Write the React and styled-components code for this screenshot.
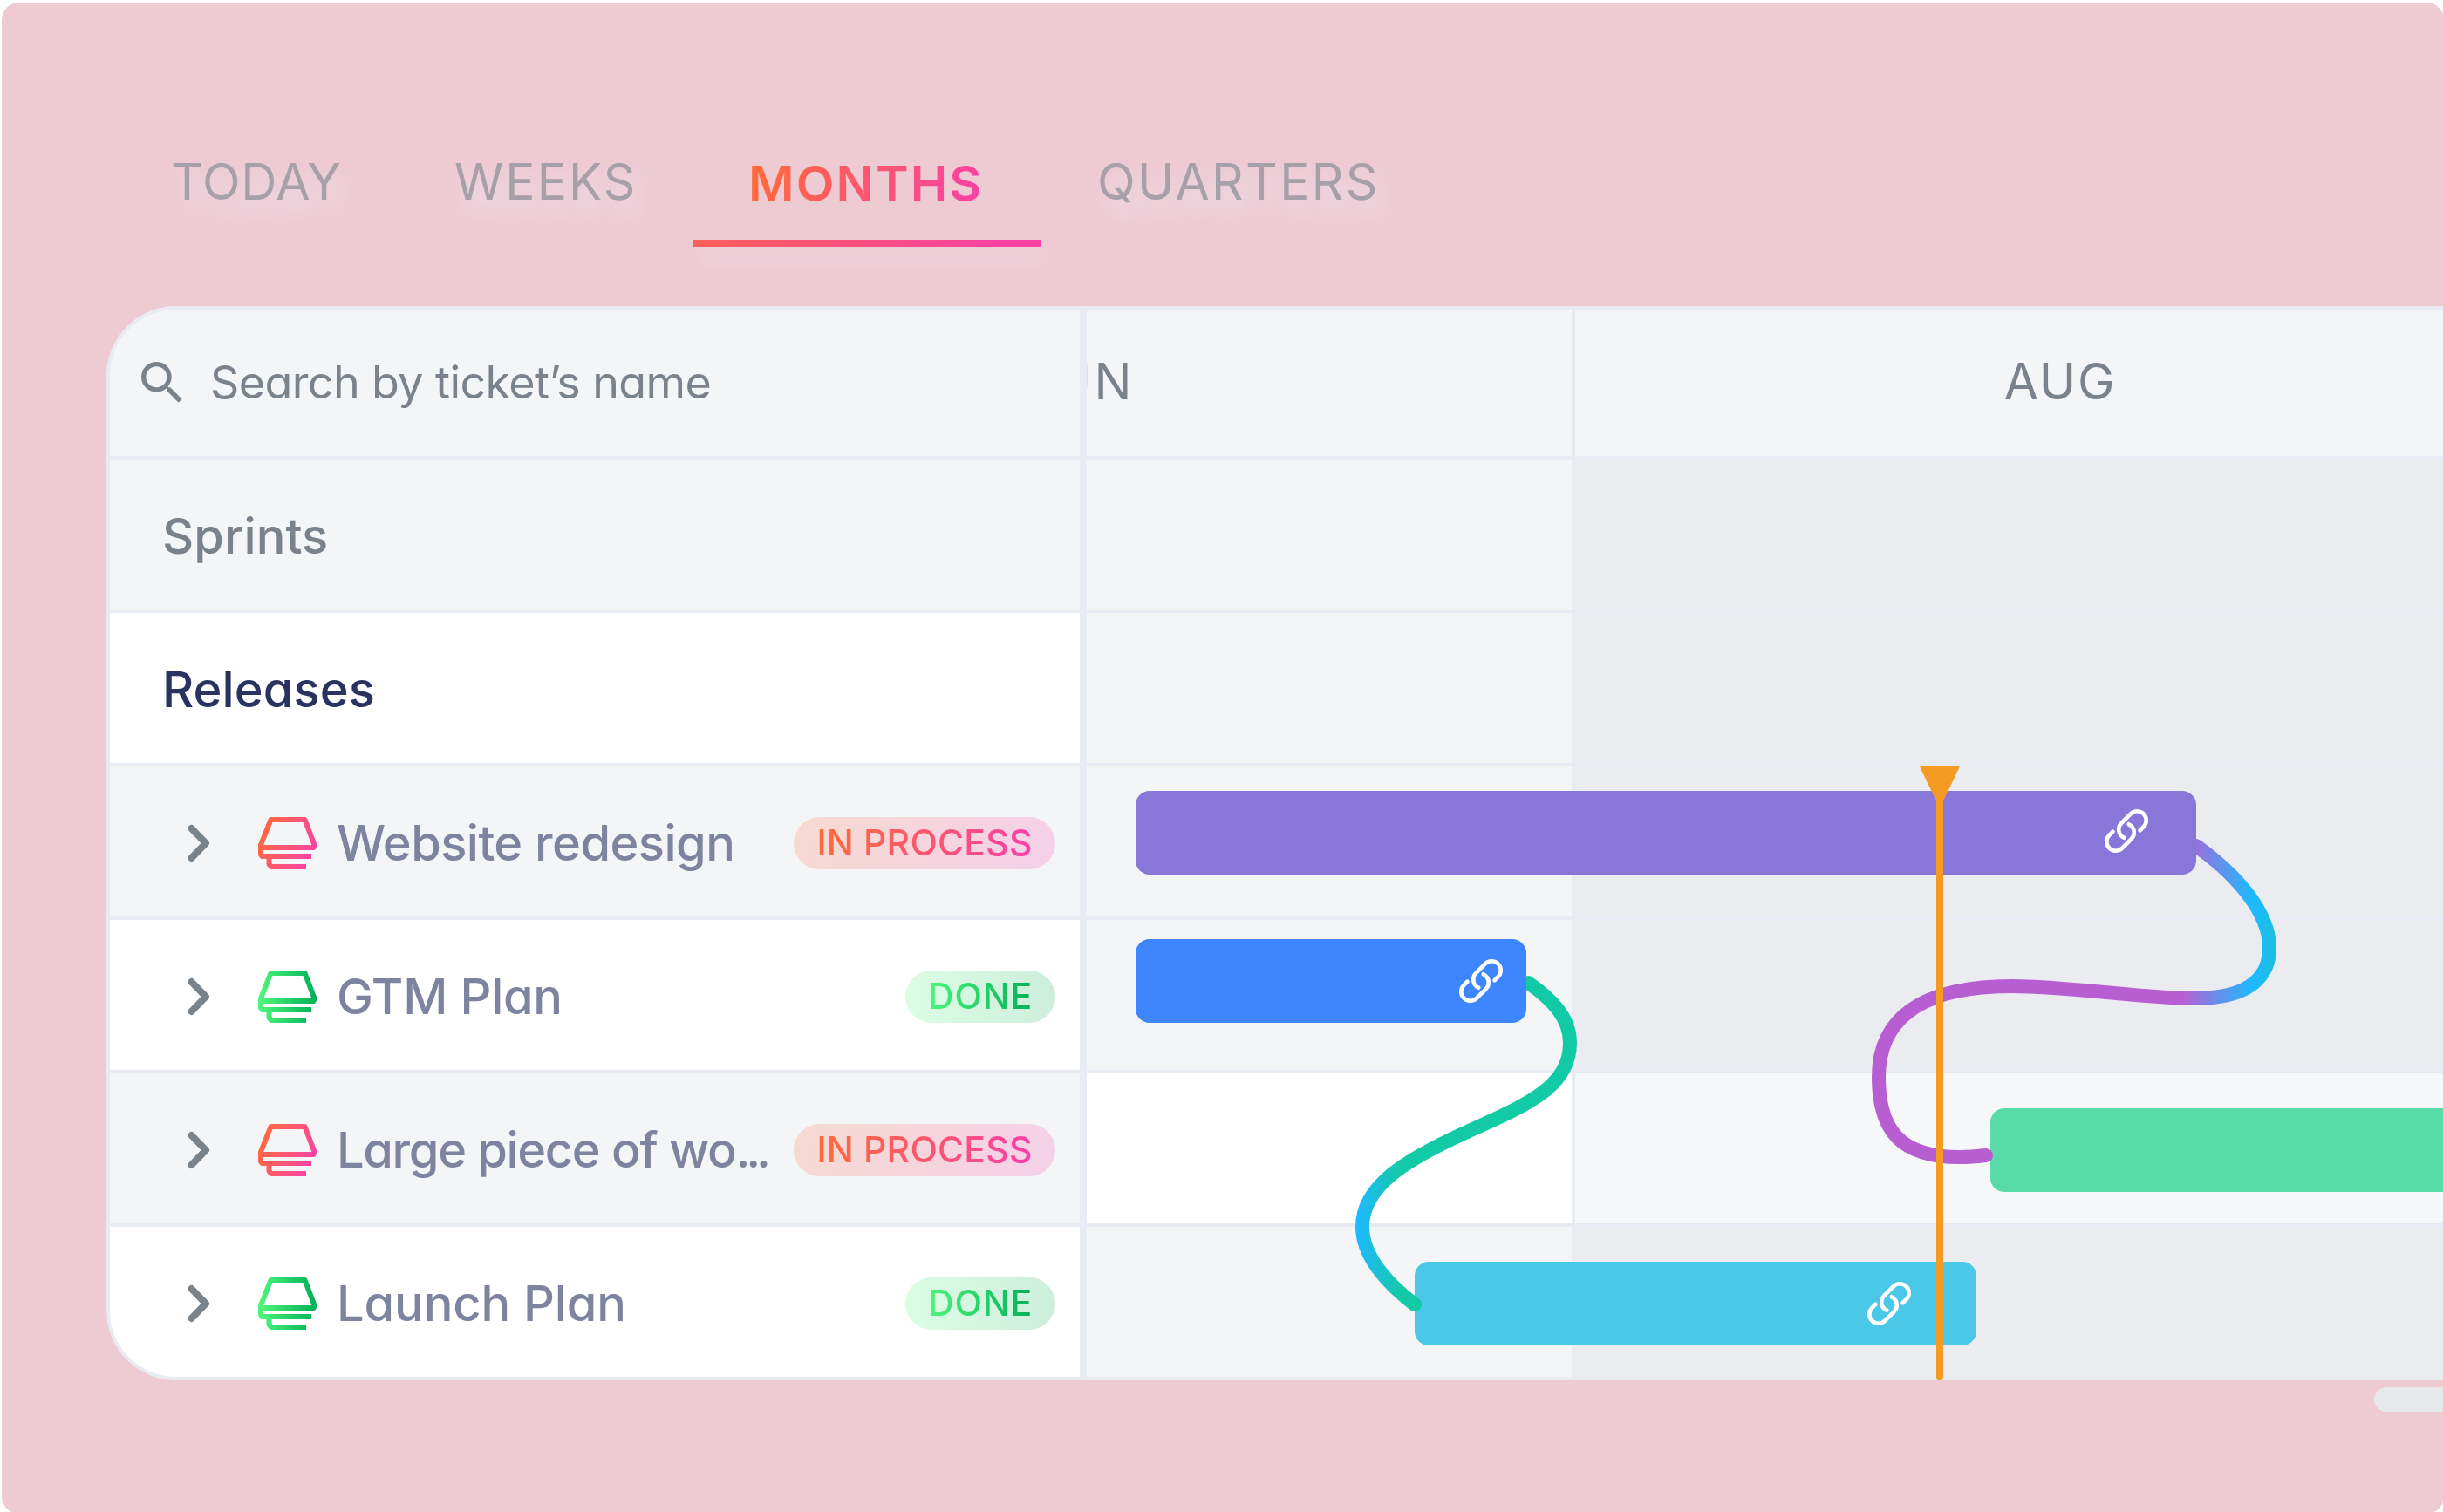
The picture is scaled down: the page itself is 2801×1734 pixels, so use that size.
import styled, { createGlobalStyle, css } from "styled-components"
import { MdSearch } from "react-icons/md"

const GlobalStyle = createGlobalStyle`
* {
box-sizing: border-box;
}
body {
margin: 0;
overflow: hidden;
background: #ffffff;
font-family: Inter, "Liberation Sans", sans-serif;
font-feature-settings: "cv11";
}
`

const line = "#e9ebf2"
const grey = "#f4f5f7"

const Frame = styled.div`
width: 2800px;
height: 1733px;
margin: 3px 0 0 2px;
border-radius: 20px;
overflow: hidden;
background: #eecad3;
`

const Tabs = styled.nav`
display: flex;
height: 280px;
padding: 166px 0 0 130px;
`

const Tab = styled.div`
display: flex;
flex-direction: column;
width: ${(p) => p.$width}px;
height: 114px;
padding: ${(p) => (p.$active ? 2 : 0)}px 0 0 64px;
font-size: 57px;
line-height: 80px;
letter-spacing: ${(p) => p.$spacing || 0}px;
white-space: nowrap;
color: #a8a0a9;
font-weight: ${(p) => (p.$active ? 600 : 400)};
text-shadow: ${(p) => (p.$active ? "none" : "8px 16px 24px rgba(236, 238, 246, 0.75)")};
`

const TabLabel = styled.span`
align-self: flex-start;
${(p) => p.$active && css`
background: linear-gradient(110deg, #ff6d35, #f93fab);
background-clip: text;
-webkit-background-clip: text;
color: transparent;
`}
`

const TabLine = styled.div`
width: 400px;
height: 8px;
margin: 24px 0 0 -64px;
background: linear-gradient(90deg, #fc6058, #f843a3 88%);
box-shadow: 8px 16px 20px rgba(236, 238, 246, 0.5);
`

const Board = styled.div`
position: relative;
margin: 68px 0 0 120px;
width: 2690px;
`

const Panel = styled.div`
display: flex;
height: 1232px;
border: 4px solid ${line};
border-radius: 80px 0 0 80px;
overflow: hidden;
background: ${grey};
`

const Sidebar = styled.div`
flex: none;
width: 1120px;
border-right: 8px solid ${line};
`

const Search = styled.div`
display: flex;
align-items: center;
height: 172px;
padding: 0 0 0 28px;
border-bottom: 4px solid ${line};
font-size: 52px;
color: #7a828c;
`

const SearchText = styled.span`
padding-bottom: 2px;
margin-left: 23px;
letter-spacing: -0.6px;
`

const Row = styled.div`
display: flex;
align-items: center;
height: 176px;
padding: 4px 28px 0 60px;
border-bottom: 4px solid ${line};
background: ${(p) => (p.$white ? "#ffffff" : grey)};
`

const Section = styled.span`
font-size: 56px;
font-weight: 500;
letter-spacing: 0.1px;
color: ${(p) => (p.$dark ? "#2a335f" : "#7a828c")};
`

const TicketName = styled.span`
margin-left: 22px;
font-size: 56px;
font-weight: 500;
letter-spacing: ${(p) => p.$spacing || 0}px;
white-space: nowrap;
color: #7e84a0;
`

const Dots = styled.span`
letter-spacing: -5.2px;
`

const Badge = styled.div`
display: flex;
flex: none;
align-items: center;
justify-content: center;
width: ${(p) => (p.$done ? 172 : 300)}px;
height: 60px;
padding-bottom: 2px;
margin-left: auto;
border-radius: 30px;
background: ${(p) => (p.$done
        ? "linear-gradient(90deg, #50f57833, #00a85033)"
        : "linear-gradient(115deg, #ff6d3533, #f83cb033)")};
`

const BadgeText = styled.span`
font-size: 41px;
font-weight: 500;
white-space: nowrap;
letter-spacing: ${(p) => (p.$done ? 0.8 : 0.2)}px;
background: ${(p) => (p.$done
        ? "linear-gradient(90deg, #4df57a, #02b058)"
        : "linear-gradient(105deg, #ff6d35, #f93fab)")};
background-clip: text;
-webkit-background-clip: text;
color: transparent;
`

const Chevron = styled.svg`
flex: none;
width: 26px;
height: 44px;
margin-left: 29px;
`

const Stack = styled.svg`
flex: none;
width: 68px;
height: 60px;
margin-left: 55px;
`

const Timeline = styled.div`
flex: 1;
`

const Months = styled.div`
display: grid;
grid-template-columns: 560px 1fr;
height: 172px;
border-bottom: 4px solid ${line};
`

const Month = styled.div`
display: flex;
align-items: center;
justify-content: ${(p) => (p.$cut ? "flex-end" : "center")};
padding: 0 ${(p) => (p.$cut ? 501 : 0)}px 4px 0;
border-right: ${(p) => (p.$cut ? 4 : 0)}px solid ${line};
overflow: hidden;
font-size: 57px;
letter-spacing: ${(p) => (p.$cut ? 3.5 : 1.7)}px;
white-space: nowrap;
color: #7a828c;
`

const AugMonth = styled(Month)`
width: 1112px;
`

const Lane = styled.div`
display: grid;
grid-template-columns: 560px 1fr;
grid-template-rows: 172px;
height: 176px;
border-bottom: 4px solid ${line};
`

const Cell = styled.div`
grid-row: 1;
grid-column: ${(p) => (p.$aug ? 2 : 1)};
border-right: ${(p) => (p.$aug ? 0 : 4)}px solid ${line};
background: ${(p) => {
        if (p.$aug) return p.$white ? "#f6f7f9" : "#ebecf0"
        return p.$white ? "#ffffff" : grey
    }};
`

const Bar = styled.div`
grid-row: 1;
grid-column: 1 / -1;
display: flex;
align-items: center;
justify-content: flex-end;
position: relative;
z-index: ${(p) => (p.$front ? 2 : 0)};
width: ${(p) => p.$width}px;
height: 96px;
margin: ${(p) => p.$top}px 0 0 ${(p) => p.$left}px;
padding-right: ${(p) => p.$end || 0}px;
border-radius: 16px;
background: ${(p) => p.$color};
`

const LinkSvg = styled.svg`
width: 56px;
height: 56px;
margin-top: ${(p) => p.$shift || 0}px;
`

// dependencies run over the lanes, from the end of one bar to the start of another
const Connectors = styled.svg`
position: absolute;
left: 0;
top: 0;
width: 2690px;
height: 1232px;
z-index: 1;
pointer-events: none;
`

const Today = styled.svg`
position: absolute;
left: 2078px;
top: 528px;
width: 48px;
height: 704px;
z-index: 3;
`

const Scrollbar = styled.div`
width: 200px;
height: 28px;
margin: 8px 0 0 2720px;
border-radius: 14px;
background: #e6e8ea;
`

const tickets = [
    { name: "Website redesign", done: false, spacing: -0.55 },
    { name: "GTM Plan", done: true, spacing: -0.3 },
    { name: "Large piece of wo", cut: true, done: false, spacing: -1.35 },
    { name: "Launch Plan", done: true, spacing: -0.1 },
]

const lanes = [
    {},
    {},
    { bar: { $left: 56, $top: 28, $width: 1216, $end: 52, $color: "#8877d8", $front: true }, link: true, shift: -4 },
    { bar: { $left: 56, $top: 22, $width: 448, $end: 24, $color: "#3e86ff", $front: true }, link: true },
    { white: true, bar: { $left: 1036, $top: 40, $width: 700, $color: "#58dba8" } },
    { bar: { $left: 376, $top: 40, $width: 644, $end: 72, $color: "#4bc7e7" }, link: true },
]

function LinkIcon({ shift }) {
    return (
        <LinkSvg $shift={shift} viewBox="0 0 24 24" fill="none" stroke="#ffffff" strokeWidth="2" strokeLinecap="round" strokeLinejoin="round">
            <path d="M13.19 8.688a4.5 4.5 0 0 1 1.242 7.244l-4.5 4.5a4.5 4.5 0 0 1-6.364-6.364l1.757-1.757" />
            <path d="M18.675 11.689l1.757-1.757a4.5 4.5 0 0 0-6.364-6.364l-4.5 4.5a4.5 4.5 0 0 0 1.242 7.244" />
        </LinkSvg>
    )
}

function StackIcon({ done, id }) {
    return (
        <Stack viewBox="0 0 68 60" fill="none" stroke={`url(#${id})`} strokeWidth="6" strokeLinejoin="round">
            <defs>
                <linearGradient id={id} gradientUnits="userSpaceOnUse" x1="2" y1={done ? 30 : 12} x2="66" y2={done ? 30 : 40}>
                    <stop offset="0" stopColor={done ? "#4df57a" : "#ff6b3d"} />
                    <stop offset="1" stopColor={done ? "#02b058" : "#f943a5"} />
                </linearGradient>
            </defs>
            <path d="M14.5 3H53.5L64.5 32L63.5 35H3V32Z" />
            <path d="M3 34V43L4.5 45H61" />
            <path d="M12.5 45V54L15 57H55" />
        </Stack>
    )
}

function App() {
    return (
        <>
            <GlobalStyle />
            <Frame>
                <Tabs>
                    <Tab $width={325} $spacing={0.8}><TabLabel>TODAY</TabLabel></Tab>
                    <Tab $width={337} $spacing={2.1}><TabLabel>WEEKS</TabLabel></Tab>
                    <Tab $width={400} $spacing={2.1} $active>
                        <TabLabel $active>MONTHS</TabLabel>
                        <TabLine />
                    </Tab>
                    <Tab $width={448} $spacing={2.3}><TabLabel>QUARTERS</TabLabel></Tab>
                </Tabs>

                <Board>
                    <Panel>
                        <Sidebar>
                            <Search>
                                <MdSearch size={64} />
                                <SearchText>Search by ticket’s name</SearchText>
                            </Search>
                            <Row><Section>Sprints</Section></Row>
                            <Row $white><Section $dark>Releases</Section></Row>
                            {tickets.map((t, i) => (
                                <Row key={t.name} $white={t.done}>
                                    <Chevron viewBox="0 0 26 44" fill="none" stroke="#7a828a" strokeWidth="8" strokeLinecap="round" strokeLinejoin="round">
                                        <path d="M4.5 5L21 22L4.5 39" />
                                    </Chevron>
                                    <StackIcon done={t.done} id={`stack${i}`} />
                                    <TicketName $spacing={t.spacing}>
                                        {t.name}{t.cut && <Dots>...</Dots>}
                                    </TicketName>
                                    <Badge $done={t.done}>
                                        <BadgeText $done={t.done}>{t.done ? "DONE" : "IN PROCESS"}</BadgeText>
                                    </Badge>
                                </Row>
                            ))}
                        </Sidebar>

                        <Timeline>
                            <Months>
                                <Month $cut>JUN</Month>
                                <AugMonth>AUG</AugMonth>
                            </Months>
                            {lanes.map((lane, i) => (
                                <Lane key={i}>
                                    <Cell $white={lane.white} />
                                    <Cell $aug $white={lane.white} />
                                    {lane.bar && (
                                        <Bar {...lane.bar}>
                                            {lane.link && <LinkIcon shift={lane.shift} />}
                                        </Bar>
                                    )}
                                </Lane>
                            ))}
                        </Timeline>
                    </Panel>

                    <Connectors viewBox="122 351 2690 1232" fill="none" strokeWidth="16" strokeLinecap="round">
                        <defs>
                            <linearGradient id="teal" gradientUnits="userSpaceOnUse" x1="1556" y1="0" x2="1606" y2="0">
                                <stop offset="0" stopColor="#1fb9ff" />
                                <stop offset="1" stopColor="#13caa6" />
                            </linearGradient>
                            <linearGradient id="violet" gradientUnits="userSpaceOnUse" x1="2502" y1="0" x2="2660" y2="0">
                                <stop offset="0" stopColor="#b75fd2" />
                                <stop offset="0.5" stopColor="#1fb9ff" />
                                <stop offset="1" stopColor="#13caa6" />
                            </linearGradient>
                        </defs>
                        <path stroke="url(#teal)" d="M1752 1127C1781 1147 1800 1168 1800 1196C1800 1248 1748 1268 1680 1299C1612 1330 1562 1360 1562 1407C1562 1440 1590 1472 1622 1496" />
                        <path stroke="url(#violet)" d="M2518 970C2560 1000 2602 1044 2602 1087C2602 1117 2583 1145 2516 1145C2460 1145 2370 1131 2306 1131C2200 1131 2154 1170 2154 1235C2154 1298 2180 1327 2247 1327C2258 1327 2268 1326 2277 1325" />
                    </Connectors>

                    <Today viewBox="0 0 48 704" fill="#f59a22">
                        <path d="M1 0H47L24 48Z" />
                        <rect x="20" y="10" width="8" height="694" rx="3" />
                    </Today>
                </Board>
                <Scrollbar />
            </Frame>
        </>
    )
}

export default App
